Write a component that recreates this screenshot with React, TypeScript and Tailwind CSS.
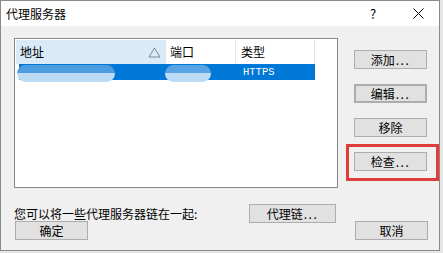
import React from 'react'

const font = { fontFamily: '"Noto Sans CJK SC", "Noto Sans", sans-serif' }

function Btn({ label, dots = false, className = '' }: { label: string; dots?: boolean; className?: string }) {
  return (
    <div
      className={`flex items-center justify-center h-[19px] bg-[#e1e1e1] border border-[#adadad] text-[12px] leading-none text-black ${className}`}
    >
      {label}
      {dots && <span className="tracking-[1.5px] pl-[1px]">...</span>}
    </div>
  )
}

export default function App() {
  return (
    <div className="w-[443px] h-[253px] bg-[#e6e6e6] overflow-hidden" style={font}>
      <div className="relative w-[440px] h-[251px] border border-[#8a8a8a] bg-[#f0f0f0] flex flex-col">
        {/* Title bar */}
        <div className="h-[25px] bg-white flex items-center shrink-0">
          <span className="pl-[5px] text-[12px] text-black">代理服务器</span>
          <span className="ml-auto w-[20px] text-center text-[13px] text-black">?</span>
          <span className="ml-[25px] mr-[11px] w-[20px] flex justify-center">
            <svg width="11" height="11" viewBox="0 0 11 11">
              <path d="M0.5 0.5 L10.5 10.5 M10.5 0.5 L0.5 10.5" stroke="#000" strokeWidth="1" />
            </svg>
          </span>
        </div>

        <div className="flex pl-[13px] pt-[12px]">
          {/* List */}
          <div className="w-[324px] h-[150px] border border-[#828790] bg-white p-px">
            <div className="flex h-[24px] text-[12px] text-black">
              <div className="w-[150px] bg-[#d9ebf9] flex items-center pl-[4px] border-r border-[#e5e5e5]">
                <span>地址</span>
                <svg className="ml-auto mr-[4px]" width="13" height="11" viewBox="0 0 13 11">
                  <path d="M6.5 1 L12 10 L1 10 Z" fill="none" stroke="#6d6d6d" strokeWidth="0.8" />
                </svg>
              </div>
              <div className="w-[70px] flex items-center pl-[4px] border-r border-[#e5e5e5]">端口</div>
              <div className="w-[79px] flex items-center pl-[5px] border-r border-[#e5e5e5]">类型</div>
            </div>
            <div className="relative ml-[3px] w-[296px] h-[16px] bg-[#0078d7] flex items-center">
              <span
                className="absolute left-[224px] top-[1px] text-[10.5px] text-white"
                style={{ fontFamily: '"Liberation Mono", monospace' }}
              >
                HTTPS
              </span>
              <div className="absolute left-[-2px] top-[1px] w-[98px] h-[17px] rounded-full overflow-hidden flex flex-col">
                <div className="h-[8px] bg-[#4c9ce0]" />
                <div className="flex-1 bg-[#bcdcf5]" />
              </div>
              <div className="absolute left-[146px] top-[1px] w-[46px] h-[17px] rounded-full overflow-hidden flex flex-col">
                <div className="h-[8px] bg-[#58a3e3]" />
                <div className="flex-1 bg-[#bcdcf5]" />
              </div>
            </div>
          </div>

          {/* Right buttons */}
          <div className="ml-[16px] pt-[12px] flex flex-col gap-[15px]">
            <Btn label="添加" dots className="w-[73px]" />
            <Btn label="编辑" dots className="w-[73px] border-2 border-[#0078d7]" />
            <Btn label="移除" className="w-[73px]" />
            <Btn label="检查" dots className="w-[73px]" />
          </div>
        </div>

        {/* Chain row */}
        <div className="flex items-center pl-[13px] mt-[16px]">
          <span className="text-[12px] text-black w-[235px]">您可以将一些代理服务器链在一起:</span>
          <Btn label="代理链" dots className="w-[87px]" />
        </div>

        {/* Bottom buttons */}
        <div className="flex pl-[14px] mt-[-2px]">
          <Btn label="确定" className="w-[73px] h-[18px]" />
          <Btn label="取消" className="w-[73px] h-[18px] ml-auto mr-[11px]" />
        </div>

        {/* Red annotation */}
        <div className="absolute left-[345px] top-[143px] w-[93px] h-[37px] border-[3px] border-[#e03c3c]" />
      </div>
    </div>
  )
}
